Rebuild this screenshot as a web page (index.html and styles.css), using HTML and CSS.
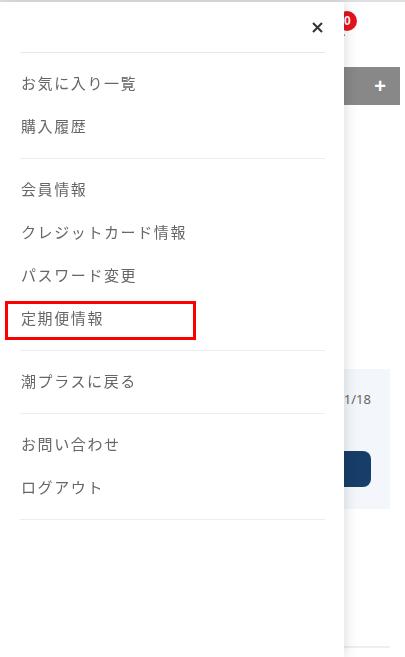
FILE: index.html
```html
<!DOCTYPE html>
<html lang="ja">
<head>
<meta charset="utf-8">
<title>メニュー</title>
<link rel="stylesheet" href="styles.css">
</head>
<body>
<div class="page">
  <header class="site-head">
    <div class="cart">
      <span class="cart-label">カート</span>
      <span class="badge">0</span>
    </div>
  </header>
  <div class="bar"><span class="bar-plus">+</span></div>
  <div class="panel">
    <div class="panel-date">2021/11/18</div>
    <div class="panel-btn"></div>
  </div>
  <div class="foot-line"></div>
</div>

<nav class="drawer">
  <div class="drawer-head">
    <svg class="close" width="11" height="11" viewBox="0 0 11 11"><path d="M1 1L10 10M10 1L1 10" stroke="#333" stroke-width="2" fill="none"/></svg>
  </div>
  <ul class="menu-group">
    <li class="menu-item">お気に入り一覧</li>
    <li class="menu-item">購入履歴</li>
  </ul>
  <ul class="menu-group">
    <li class="menu-item">会員情報</li>
    <li class="menu-item">クレジットカード情報</li>
    <li class="menu-item">パスワード変更</li>
    <li class="menu-item menu-item--marked">定期便情報</li>
  </ul>
  <ul class="menu-group">
    <li class="menu-item">潮プラスに戻る</li>
  </ul>
  <ul class="menu-group">
    <li class="menu-item">お問い合わせ</li>
    <li class="menu-item">ログアウト</li>
  </ul>
</nav>
</body>
</html>
```
FILE: styles.css
```css
html, body {
  margin: 0;
  padding: 0;
  background: #fff;
  font-family: "Noto Sans CJK JP", "Noto Sans", sans-serif;
}
body {
  border-top: 2px solid #dfe0e6;
  height: 655px;
  overflow: hidden;
}
.page {
  display: flex;
  flex-direction: column;
}
.site-head {
  height: 60px;
  display: flex;
  justify-content: flex-end;
}
.cart {
  position: relative;
  width: 80px;
  margin-right: 48px;
  height: 60px;
}
.cart-label {
  position: absolute;
  right: 11px;
  top: 27px;
  font-size: 9px;
  line-height: 12px;
  color: #1a3c6c;
  font-weight: bold;
}
.badge {
  position: absolute;
  right: 0;
  top: 9px;
  width: 20px;
  height: 20px;
  border-radius: 50%;
  background: #e5141e;
  color: #fff;
  font-size: 12px;
  font-weight: bold;
  line-height: 20px;
  padding-left: 7px;
  box-sizing: border-box;
  font-family: "Liberation Sans", sans-serif;
}
.bar {
  margin: 5px 5px 0 5px;
  height: 38px;
  background: #888;
  display: flex;
  align-items: center;
  justify-content: flex-end;
  padding-right: 14px;
}
.bar-plus {
  color: #fff;
  font-size: 20px;
  font-weight: bold;
  line-height: 20px;
  font-family: "Liberation Sans", sans-serif;
}
.panel {
  margin: 264px 15px 0 15px;
  height: 140px;
  background: #f3f6fa;
  padding: 22px 19px 0 0;
  box-sizing: border-box;
  display: flex;
  flex-direction: column;
  align-items: flex-end;
}
.panel-date {
  font-size: 13px;
  line-height: 16px;
  color: #666;
  font-family: "Noto Sans", sans-serif;
}
.panel-btn {
  margin-top: 44px;
  width: 300px;
  height: 36px;
  background: #173e68;
  border-radius: 8px;
}
.foot-line {
  margin: 137px 15px 0 15px;
  height: 2px;
  background: #eeeeee;
}

.drawer {
  position: fixed;
  left: 0;
  top: 2px;
  bottom: 0;
  width: 344px;
  background: #fff;
  box-shadow: 2px 0 12px rgba(0, 0, 0, 0.13);
  padding: 0 19px 0 20px;
  box-sizing: border-box;
}
.drawer-head {
  height: 50px;
  display: flex;
  justify-content: flex-end;
  align-items: center;
  border-bottom: 1px solid #e3e8e8;
}
.close {
  margin-right: 2px;
}
.menu-group {
  list-style: none;
  margin: 0;
  padding: 9.5px 0;
  border-bottom: 1px solid #eceeee;
}
.menu-item {
  height: 43px;
  line-height: 39px;
  padding: 0 0 4px 1px;
  box-sizing: border-box;
  font-size: 15px;
  letter-spacing: 1.6px;
  color: #666;
  white-space: nowrap;
}
.menu-item--marked {
  position: relative;
}
.menu-item--marked::after {
  content: "";
  position: absolute;
  left: -15px;
  top: 3px;
  width: 191px;
  height: 39px;
  border: 3px solid #f00;
  box-sizing: border-box;
}
```
